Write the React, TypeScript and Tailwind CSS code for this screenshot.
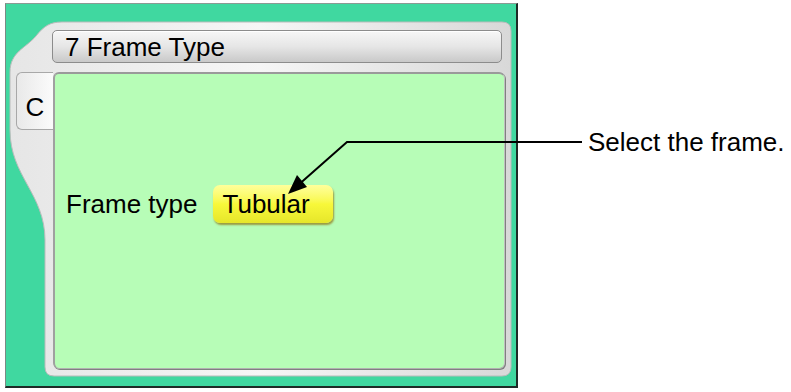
import React from "react";

export default function App() {
  const font = { fontFamily: '"Liberation Sans", Arial, sans-serif' };
  return (
    <div className="relative w-[791px] h-[392px] bg-white overflow-hidden" style={font}>
      <div className="ml-[5px] mt-[3px] w-[513px] h-[385px] relative bg-[#40d8a0] border-t border-l border-t-[#8a9a94] border-l-[#7a8a84] border-r-2 border-b-2 border-r-[#1e2a26] border-b-[#1e2a26]">
        {/* bezel silhouette */}
        <svg className="absolute left-0 top-0" width="511" height="383" viewBox="0 0 511 383">
          <defs>
            <linearGradient id="bz" x1="0" y1="0" x2="1" y2="0">
              <stop offset="0" stopColor="#e6e6e6" />
              <stop offset="0.5" stopColor="#f6f6f6" />
              <stop offset="1" stopColor="#d8d8d8" />
            </linearGradient>
          </defs>
          <path
            d="M 4 68 C 4 48, 20 44, 30 32 C 38 22, 44 18, 56 18 L 496 18 Q 505 18 505 27 L 505 363 Q 505 372 496 372 L 48 372 Q 39 372 39 363 L 39 236 C 39 190, 4 172, 4 126 Z"
            fill="url(#bz)"
            stroke="#b9bcbb"
            strokeWidth="1"
          />
        </svg>
        <div className="relative flex flex-col pt-[26px] pl-[10px]">
          <div className="ml-[36px] w-[450px] h-[33px] rounded-[5px] border border-[#8c8c8c] bg-gradient-to-b from-[#f7f7f7] via-[#e6e6e6] to-[#c9c9c9] shadow-[inset_0_1px_0_#ffffff] flex items-center pl-[12px] text-[26px] leading-none text-black">
            7 Frame Type
          </div>
          <div className="flex mt-[9px]">
            <div className="w-[37px] h-[58px] rounded-l-[6px] border border-r-0 border-[#a8a8a8] bg-gradient-to-r from-[#e9e9e9] to-[#fbfbfb] flex items-start justify-center pt-[21px] text-[26px] leading-none text-black">
              C
            </div>
            <div className="w-[452px] h-[297px] rounded-[6px] bg-[#b7fdb7] border-t-2 border-l-2 border-t-[#9a9a9a] border-l-[#a0a0a0] border-r border-b border-r-[#c0c0c0] border-b-[#b0b0b0] shadow-[1px_1px_0_#808080] flex flex-col">
              <div className="flex items-center mt-[111px] pl-[11px]">
                <span className="text-[26px] leading-none text-black">Frame type</span>
                <div className="ml-[15px] w-[120px] h-[38px] rounded-[7px] bg-gradient-to-b from-[#ffff9a] via-[#f8f83a] to-[#e6e62a] shadow-[1px_2px_2px_#9a9a40] flex items-center pl-[10px] text-[26px] leading-none text-black">
                  Tubular
                </div>
              </div>
            </div>
          </div>
        </div>
      </div>

      {/* callout */}
      <svg className="absolute left-0 top-0 pointer-events-none" width="791" height="392">
        <polyline points="582,142 347,142 296,187" fill="none" stroke="#000" strokeWidth="2" />
        <polygon points="288,194 297,175 307,187" fill="#000" />
      </svg>
      <div className="absolute left-[588px] top-[129px] text-[26px] leading-none text-black whitespace-nowrap">
        Select the frame.
      </div>
    </div>
  );
}
